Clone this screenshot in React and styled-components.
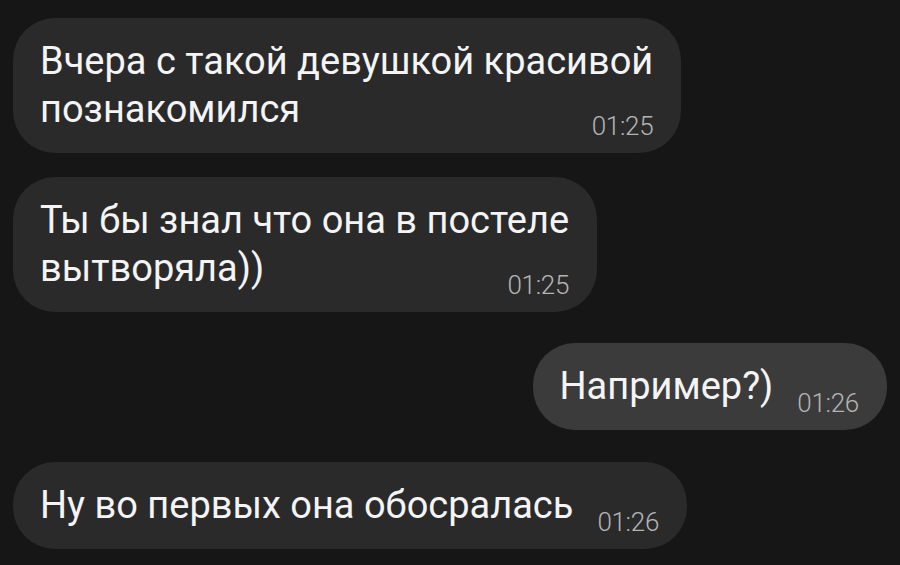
import React from "react";
import styled, { createGlobalStyle } from "styled-components";

const GlobalStyle = createGlobalStyle`
  html, body {
    margin: 0;
    padding: 0;
    background: #161616;
  }
  body {
    width: 900px;
    height: 565px;
    overflow: hidden;
    font-family: Roboto, "Noto Sans", sans-serif;
  }
`;

const Chat = styled.main`
  display: flex;
  flex-direction: column;
  padding: 18px 13px 0 13px;
  box-sizing: border-box;
  height: 565px;
  background: #161616;
`;

const Row = styled.div`
  display: flex;
  justify-content: ${(p) => (p.$out ? "flex-end" : "flex-start")};
  margin-top: ${(p) => p.$gap}px;
`;

const Bubble = styled.div`
  display: flex;
  flex-direction: column;
  padding: 19px 28px 20px 27px;
  border-radius: 42px;
  background: ${(p) => (p.$out ? "#3b3b3c" : "#2a2a2b")};
  color: #f4f4f4;
`;

const Line = styled.div`
  display: flex;
  align-items: flex-end;
  font-size: 38px;
  line-height: 48px;
  white-space: nowrap;
`;

const Time = styled.span`
  margin-left: auto;
  padding-left: 24px;
  margin-bottom: -6px;
  font-size: 26px;
  line-height: 26px;
  font-weight: 300;
  color: #b4b4b4;
  letter-spacing: -0.3px;
`;

const messages = [
  { lines: ["Вчера с такой девушкой красивой", "познакомился"], time: "01:25", gap: 0 },
  { lines: ["Ты бы знал что она в постеле", "вытворяла))"], time: "01:25", gap: 24 },
  { lines: ["Например?)"], time: "01:26", gap: 31, out: true },
  { lines: ["Ну во первых она обосралась"], time: "01:26", gap: 32 },
];

export default function App() {
  return (
    <>
      <GlobalStyle />
      <Chat>
        {messages.map((m, i) => (
          <Row key={i} $out={m.out} $gap={m.gap}>
            <Bubble $out={m.out}>
              {m.lines.map((text, j) => (
                <Line key={j}>
                  <span>{text}</span>
                  {j === m.lines.length - 1 && <Time>{m.time}</Time>}
                </Line>
              ))}
            </Bubble>
          </Row>
        ))}
      </Chat>
    </>
  );
}
